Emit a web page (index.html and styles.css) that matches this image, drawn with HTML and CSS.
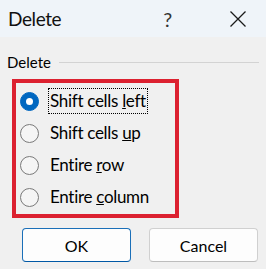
FILE: index.html
```html
<!DOCTYPE html>
<html lang="en">
<head>
<meta charset="utf-8">
<title>Delete</title>
<link rel="stylesheet" href="styles.css">
</head>
<body>
<div class="dialog">
  <header class="titlebar">
    <span class="title">Delete</span>
    <span class="help">?</span>
    <span class="close">
      <svg width="16" height="16" viewBox="0 0 16 16"><path d="M0.5 0.5 L15.5 15.5 M15.5 0.5 L0.5 15.5" stroke="#1a1a1a" stroke-width="1.3" fill="none"/></svg>
    </span>
  </header>
  <main class="content">
    <div class="group-label"><span>Delete</span><span class="rule"></span></div>
    <div class="options">
      <label class="option"><span class="radio checked"></span><span class="text focus">Shift cells <u>l</u>eft</span></label>
      <label class="option"><span class="radio"></span><span class="text">Shift cells <u>u</u>p</span></label>
      <label class="option"><span class="radio"></span><span class="text">Entire <u>r</u>ow</span></label>
      <label class="option"><span class="radio"></span><span class="text">Entire <u>c</u>olumn</span></label>
    </div>
    <div class="buttons">
      <button class="btn default">OK</button>
      <button class="btn">Cancel</button>
    </div>
  </main>
</div>
</body>
</html>
```
FILE: styles.css
```css
html, body { margin: 0; padding: 0; }
body {
  width: 266px;
  height: 269px;
  background: #f0f0f0;
  font-family: Lato, "Noto Sans", sans-serif;
  color: #000;
  overflow: hidden;
}
.dialog { display: flex; flex-direction: column; }
.titlebar {
  height: 37px;
  background: #eff4f9;
  display: flex;
  align-items: center;
}
.title { font-size: 19px; letter-spacing: -0.4px; padding-left: 8px; line-height: 1; color: #111; }
.help { font-size: 20px; line-height: 1; margin-left: 102px; color: #333; }
.close { display: flex; margin-left: 58px; }
.content { display: flex; flex-direction: column; }
.group-label {
  display: flex;
  align-items: center;
  font-size: 15px;
  padding: 0 7px;
  margin-top: 16px;
  height: 18px;
  gap: 8px;
}
.rule { flex: 1; height: 1px; background: #d3d3d3; }
.options {
  margin: 8px 0 0 12px;
  width: 155px;
  border: 4px solid #dc2130;
  padding: 2px 0 1px 4px;
  display: flex;
  flex-direction: column;
}
.option {
  height: 32px;
  display: flex;
  align-items: center;
  gap: 9px;
  font-size: 17px;
  letter-spacing: -0.3px;
}
.radio {
  width: 17px;
  height: 17px;
  border: 1px solid #7a7a7a;
  border-radius: 50%;
  background: #f5f5f5;
  box-sizing: content-box;
  position: relative;
  flex: none;
}
.radio.checked {
  background: #0067c0;
  border-color: #0067c0;
}
.radio.checked::after {
  content: "";
  position: absolute;
  left: 5px; top: 5px;
  width: 7px; height: 7px;
  border-radius: 50%;
  background: #fff;
}
.text { padding: 2px 1px; border: 1px dotted transparent; line-height: 20px; }
.text.focus { border-color: #000; }
.buttons {
  display: flex;
  gap: 18px;
  padding-left: 22px;
  margin-top: 10px;
}
.btn {
  width: 109px;
  height: 34px;
  background: #fdfdfd;
  border: 1px solid #d0d0d0;
  border-bottom-color: #bdbdbd;
  border-radius: 4px;
  font-family: inherit;
  font-size: 16px;
  color: #000;
  padding: 0;
}
.btn.default { border-color: #1a6fb8; border-bottom-color: #0058a5; }
```
